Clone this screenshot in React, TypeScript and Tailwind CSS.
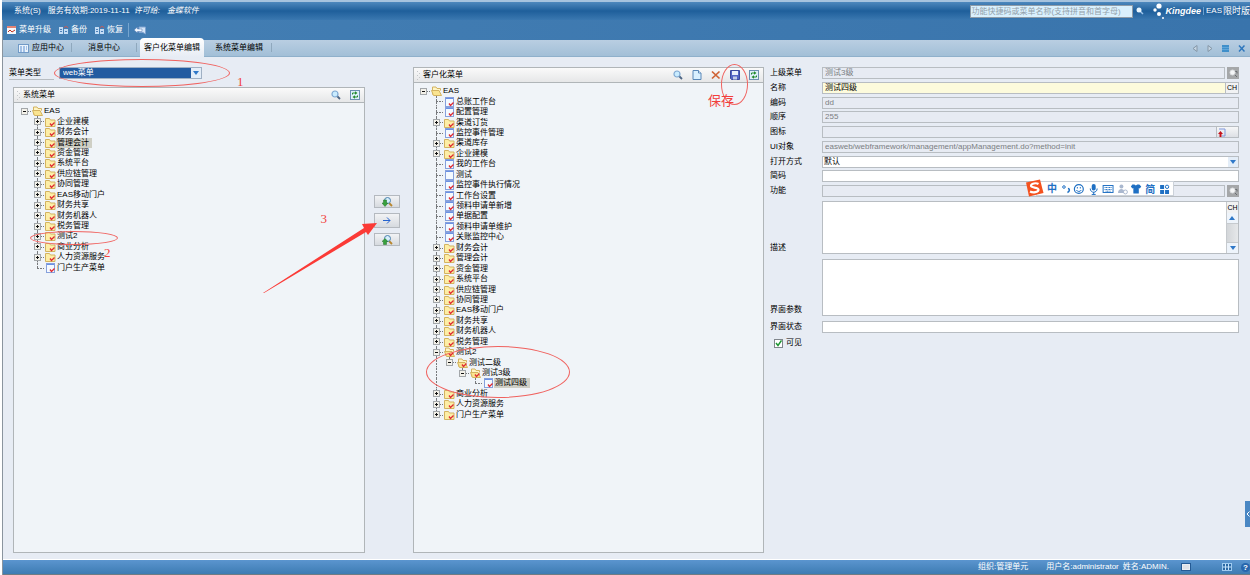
import { FC, ReactNode, useState } from "react";

type Guide = "none" | "line" | "tee" | "end" | "root";
type IconKind = "open" | "openCheck" | "folder" | "doc" | "blank";

interface TreeNode {
	label: string;
	icon: IconKind;
	guides: Guide[];
	toggle?: "+" | "-";
}

const folder = (label: string): TreeNode => ({
	label,
	icon: "folder",
	guides: ["none", "tee"],
	toggle: "+",
});

const doc = (label: string): TreeNode => ({ label, icon: "doc", guides: ["none", "tee"] });

const root: TreeNode = { label: "EAS", icon: "open", guides: ["root"], toggle: "-" };

const systemTree: TreeNode[] = [
	root,
	folder("企业建模"),
	folder("财务会计"),
	folder("管理会计"),
	folder("资金管理"),
	folder("系统平台"),
	folder("供应链管理"),
	folder("协同管理"),
	folder("EAS移动门户"),
	folder("财务共享"),
	folder("财务机器人"),
	folder("税务管理"),
	folder("测试2"),
	folder("商业分析"),
	folder("人力资源服务"),
	{ label: "门户生产菜单", icon: "doc", guides: ["none", "end"] },
];

const customTree: TreeNode[] = [
	root,
	doc("总账工作台"),
	doc("配置管理"),
	folder("渠道订货"),
	doc("监控事件管理"),
	folder("渠道库存"),
	folder("企业建模"),
	doc("我的工作台"),
	{ label: "测试", icon: "blank", guides: ["none", "tee"] },
	doc("监控事件执行情况"),
	doc("工作台设置"),
	doc("领料申请单新增"),
	doc("单据配置"),
	doc("领料申请单维护"),
	doc("关账监控中心"),
	folder("财务会计"),
	folder("管理会计"),
	folder("资金管理"),
	folder("系统平台"),
	folder("供应链管理"),
	folder("协同管理"),
	folder("EAS移动门户"),
	folder("财务共享"),
	folder("财务机器人"),
	folder("税务管理"),
	{ label: "测试2", icon: "openCheck", guides: ["none", "tee"], toggle: "-" },
	{ label: "测试二级", icon: "openCheck", guides: ["none", "line", "end"], toggle: "-" },
	{ label: "测试3级", icon: "openCheck", guides: ["none", "line", "none", "end"], toggle: "-" },
	{ label: "测试四级", icon: "doc", guides: ["none", "line", "none", "none", "end"] },
	folder("商业分析"),
	folder("人力资源服务"),
	{ label: "门户生产菜单", icon: "folder", guides: ["none", "end"], toggle: "+" },
];

const NodeIcon: FC<{ kind: IconKind }> = ({ kind }) => (
	<svg className="ml-px h-[10px] w-[11px] shrink-0" viewBox="0 0 11 10" fill="none">
		{(kind === "doc" || kind === "blank") && (
			<>
				<rect x="1.5" y="0.5" width="8" height="9" fill="#f4f9ff" stroke="#86a0dc" />
				<path d="M2 1.5h7" stroke="#6a90e4" />
			</>
		)}
		{kind === "folder" && (
			<path d="M0.5 9.5v-8h4l1 1.500h4.500v6.500z" fill="#fdeea6" stroke="#d3b360" />
		)}
		{(kind === "open" || kind === "openCheck") && (
			<>
				<path d="M1.5 8.5v-7.5h3.500l1 1.500h3.500v2" fill="#fff5c4" stroke="#d3b360" />
				<path d="M2.500 9.500l-2-5h7.500l2.500 5z" fill="#fae490" stroke="#d3b360" />
			</>
		)}
		{kind !== "open" && kind !== "blank" && (
			<path d="M5 6.500l1.500 2 3-3" stroke="#e02a32" strokeWidth="1.300" />
		)}
	</svg>
);

const GuideCell: FC<{ guide: Guide; toggle?: "+" | "-"; label: string }> = ({
	guide,
	toggle,
	label,
}) => (
	<span className="grid h-full w-[13px] shrink-0 place-items-center">
		<svg className="h-full w-[13px] [grid-area:1/1]" stroke="#77797c" strokeDasharray="2 1">
			{(guide === "line" || guide === "tee") && <line x1="6.5" y1="0" x2="6.5" y2="100%" />}
			{guide === "end" && <line x1="6.5" y1="0" x2="6.5" y2="50%" />}
			{guide !== "none" && guide !== "line" && <path d="M6 5.500h7" />}
		</svg>
		{toggle && (
			<button
				type="button"
				aria-label={`${toggle === "+" ? "展开" : "折叠"}${label}`}
				className="[grid-area:1/1]"
			>
				<svg className="block size-[7px]" viewBox="0 0 7 7">
					<rect x="0.5" y="0.5" width="6" height="6" fill="#f3f1e9" stroke="#a3a7aa" />
					<path d="M2 3.500h3" stroke="#111" />
					{toggle === "+" && <path d="M3.500 2v3" stroke="#111" />}
				</svg>
			</button>
		)}
	</span>
);

const Tree: FC<{ nodes: TreeNode[]; initial: string; className: string }> = ({
	nodes,
	initial,
	className,
}) => {
	const [selected, setSelected] = useState(initial);

	return (
		<ul className={`grid auto-rows-fr ${className}`}>
			{nodes.map((node) => (
				<li key={node.label} className="flex min-h-0 items-center">
					{node.guides.map((guide, i) => (
						<GuideCell
							key={i}
							guide={guide}
							toggle={i === node.guides.length - 1 ? node.toggle : undefined}
							label={node.label}
						/>
					))}
					<NodeIcon kind={node.icon} />
					<button
						type="button"
						onClick={() => setSelected(node.label)}
						className={`h-[10px] px-px leading-[10px] whitespace-nowrap ${
							selected === node.label ? "bg-[#cfcfc5] pr-[3px]" : ""
						}`}
					>
						{node.label}
					</button>
				</li>
			))}
		</ul>
	);
};

const SearchIcon: FC = () => (
	<svg className="block size-[10px]" viewBox="0 0 10 10" fill="none">
		<path d="M6 6l3 3" stroke="#4e6684" strokeWidth="1.800" />
		<circle cx="4" cy="4" r="3" fill="#c9ecff" stroke="#7fa8d2" strokeWidth="1.200" />
	</svg>
);

const RefreshIcon: FC = () => (
	<svg className="block size-[10px]" viewBox="0 0 10 10" fill="none">
		<rect x="0.5" y="0.5" width="9" height="9" fill="#dff0fb" stroke="#6d8fb2" />
		<path d="M2.500 4.500v-1.500h3M7.500 5.500v1.500h-3" stroke="#218a2c" />
		<path d="M5 1.200l2.500 1.800L5 4.800zM5 5.200v3.600L2.500 7z" fill="#218a2c" />
	</svg>
);

const NewIcon: FC = () => (
	<svg className="block size-[10px]" viewBox="0 0 10 10">
		<path d="M1 0.500h5.500l2.500 2.500v6.500H1z" fill="#d9f0ff" stroke="#5a88b8" />
		<path d="M6.500 0.500v2.500H9" fill="#fff" stroke="#5a88b8" />
	</svg>
);

const DeleteIcon: FC = () => (
	<svg className="block size-[10px]" viewBox="0 0 10 10" fill="none">
		<path d="M1 1.500l7.500 7M8.500 1.500L1 8.500" stroke="#cf6233" strokeWidth="1.700" />
	</svg>
);

const SaveIcon: FC = () => (
	<svg className="block size-[10px]" viewBox="0 0 10 10">
		<path d="M0.500 0.500h9v9h-8l-1-1z" fill="#5566c4" stroke="#3c4a9c" />
		<path d="M2 1h6v4H2z" fill="#eaf0fb" />
		<path d="M3 6.500h4V9.500H3z" fill="#c3cce8" />
	</svg>
);

const IconButton: FC<{ label: string; children: ReactNode }> = ({ label, children }) => (
	<button type="button" aria-label={label} className="shrink-0">
		{children}
	</button>
);

const Panel: FC<{ title: string; tools: ReactNode; children: ReactNode }> = ({
	title,
	tools,
	children,
}) => (
	<section className="flex min-h-0 flex-1 flex-col border border-[#b0b5b8] bg-[#f0f4f8]">
		<header className="flex h-[15px] items-center border-b border-[#b0b5b8] bg-linear-to-b from-[#fafafa] to-[#e6e7e8] pr-1 pl-[3px]">
			<svg className="mr-[2px] h-[9px] w-1" viewBox="0 0 4 9" fill="#c3c6c9">
				<path d="M0 0h1v1H0zM2 2h1v1H2zM0 4h1v1H0zM2 6h1v1H2zM0 8h1v1H0z" />
			</svg>
			<h2 className="flex-1">{title}</h2>
			<div className="flex gap-[9px]">{tools}</div>
		</header>
		{children}
	</section>
);

const TransferIcon: FC<{ up?: boolean }> = ({ up }) => (
	<svg className="h-[10px] w-[11px]" viewBox="0 0 11 10" fill="none">
		<path d="M7 6l3 3" stroke="#b8862d" strokeWidth="1.800" />
		<circle cx="5.500" cy="3.500" r="3" fill="#d5eefb" stroke="#4a80ae" />
		<path
			d={up ? "M3 3.500l3 3H4.500v3h-3v-3H0z" : "M1.500 3h3v3H6l-3 3.500L0 6h1.500z"}
			fill="#37a13c"
			stroke="#1e7026"
			strokeWidth="0.500"
		/>
	</svg>
);

const transferStyle =
	"flex w-[26px] items-center justify-center border border-[#b4b9bf] bg-linear-to-b from-[#f2f3f5] to-[#d6dadf]";

const Chevron: FC = () => (
	<svg className="h-1 w-[6px]" viewBox="0 0 6 4">
		<path d="M0 0h6L3 4z" fill="#2f78c8" />
	</svg>
);

const LookupButton: FC<{ label: string }> = ({ label }) => (
	<button
		type="button"
		aria-label={label}
		className="ml-[2px] flex h-[12px] w-3 shrink-0 items-center justify-center bg-[#a5a7a9]"
	>
		<svg className="size-[9px]" viewBox="0 0 9 9" fill="none">
			<path d="M5 5l3 3M6 2.500h2v2" stroke="#6a6d70" />
			<circle cx="3.500" cy="3.500" r="2.500" fill="#f5f6f7" stroke="#dfe1e3" />
		</svg>
	</button>
);

const boxStyle = "min-w-0 flex-1 border border-[#b8bdc2] outline-none";

const Row: FC<{ id: string; label: string; children: ReactNode }> = ({ id, label, children }) => (
	<div className="flex h-3 items-center">
		<label htmlFor={id} className="w-[52px] shrink-0">
			{label}
		</label>
		{children}
	</div>
);

const ReadOnlyInput: FC<{ id: string; value: string }> = ({ id, value }) => (
	<input
		id={id}
		readOnly
		defaultValue={value}
		className={`${boxStyle} h-3 bg-[#e7ebf3] px-[2px] text-[#7b7e82]`}
	/>
);

const MenuForm: FC = () => (
	<form className="min-w-0 flex-[469]">
		<div className="flex h-[130px] flex-col justify-between">
			<Row id="parent" label="上级菜单">
				<ReadOnlyInput id="parent" value="测试3级" />
				<LookupButton label="选择上级菜单" />
			</Row>
			<Row id="name" label="名称">
				<input
					id="name"
					defaultValue="测试四级"
					className={`${boxStyle} h-3 bg-[#fdfbdc] px-[2px]`}
				/>
				<button
					type="button"
					className="flex h-3 w-[13px] items-center justify-center border border-l-0 border-[#b8bdc2] bg-[#f1f2f3] text-[7px] leading-[10px]"
				>
					CH
				</button>
			</Row>
			<Row id="code" label="编码">
				<ReadOnlyInput id="code" value="dd" />
			</Row>
			<Row id="order" label="顺序">
				<ReadOnlyInput id="order" value="255" />
			</Row>
			<Row id="icon" label="图标">
				<ReadOnlyInput id="icon" value="" />
				<button
					type="button"
					aria-label="上传图标"
					className="flex h-3 w-[22px] items-center border border-l-0 border-[#b8bdc2] bg-linear-to-b from-[#f6f7f8] to-[#dde0e5]"
				>
					<svg className="size-[9px]" viewBox="0 0 9 9" fill="none">
						<path d="M2 1h6v7H5" stroke="#7f97dd" />
						<path d="M3.500 3L6 6H4.500v3h-2V6H1z" fill="#c4121c" />
					</svg>
				</button>
			</Row>
			<Row id="ui" label="UI对象">
				<ReadOnlyInput
					id="ui"
					value="easweb/webframework/management/appManagement.do?method=init"
				/>
			</Row>
			<Row id="mode" label="打开方式">
				<div className="grid min-w-0 flex-1 items-center">
					<select
						id="mode"
						className="h-3 w-full appearance-none border border-[#b8bdc2] bg-white px-px leading-[10px] outline-none [grid-area:1/1]"
					>
						<option>默认</option>
					</select>
					<span className="pointer-events-none mr-px flex h-[10px] w-[10px] items-center justify-center justify-self-end bg-[#e3edf8] [grid-area:1/1]">
						<Chevron />
					</span>
				</div>
			</Row>
			<Row id="short" label="简码">
				<input id="short" className={`${boxStyle} h-3 bg-white px-px`} />
			</Row>
			<Row id="func" label="功能">
				<ReadOnlyInput id="func" value="" />
				<LookupButton label="选择功能" />
			</Row>
		</div>
		<div className="mt-1 flex items-end">
			<label htmlFor="desc" className="w-[52px] shrink-0">
				描述
			</label>
			<div className="flex h-[53px] min-w-0 flex-1 border border-[#b8bdc2] bg-white">
				<textarea id="desc" className="min-w-0 flex-1 resize-none outline-none" />
				<div className="flex w-3 flex-col border-l border-[#c6cace] bg-[#dcdfe3]">
					<button
						type="button"
						className="flex h-[11px] items-center justify-center bg-[#f1f2f3] text-[7px] leading-[10px]"
					>
						CH
					</button>
					<button
						type="button"
						aria-label="向上滚动"
						className="flex h-[10px] rotate-180 items-center justify-center bg-[#eef4fb]"
					>
						<Chevron />
					</button>
					<span className="flex-1 border-y border-[#c6cace] bg-linear-to-r from-[#d3d6d9] to-[#e6e8ea]" />
					<button
						type="button"
						aria-label="向下滚动"
						className="flex h-[10px] items-center justify-center bg-[#eef4fb]"
					>
						<Chevron />
					</button>
				</div>
			</div>
		</div>
		<div className="mt-[5px] flex items-end">
			<label htmlFor="params" className="w-[52px] shrink-0">
				界面参数
			</label>
			<textarea id="params" className={`${boxStyle} h-[57px] resize-none bg-white`} />
		</div>
		<div className="mt-[5px]">
			<Row id="state" label="界面状态">
				<input id="state" className={`${boxStyle} h-3 bg-white px-px`} />
			</Row>
		</div>
		<label className="mt-1 ml-1 flex w-fit items-center gap-[3px]">
			<span className="grid size-[9px] place-items-center">
				<input
					type="checkbox"
					defaultChecked
					className="peer size-[9px] appearance-none border border-[#80868c] bg-white [grid-area:1/1]"
				/>
				<svg
					className="pointer-events-none invisible size-[7px] peer-checked:visible [grid-area:1/1]"
					viewBox="0 0 7 7"
					fill="none"
				>
					<path d="M1 3l2 2.500 3.500-5" stroke="#1d9632" strokeWidth="1.500" />
				</svg>
			</span>
			可见
		</label>
	</form>
);

const TitleBar: FC = () => (
	<header className="flex h-[20px] items-center border-t-2 border-[#a6c3de] bg-linear-to-b from-[#4d88bd] via-[#1e5f9b] to-[#3a78b0] pl-3 text-white">
		<button type="button">系统(S)</button>
		<span className="ml-[7px]">服务有效期:2019-11-11</span>
		<span className="ml-1 italic">许可给:</span>
		<span className="ml-[7px] italic">金蝶软件</span>
		<input
			aria-label="功能搜索"
			placeholder="功能快捷码或菜单名称(支持拼音和首字母)"
			className="ml-auto h-[13px] w-[163px] border border-[#8f9ca8] bg-[#d9f0fd] text-black outline-none placeholder:text-[#92a0aa]"
		/>
		<button type="button" aria-label="搜索" className="ml-[3px]">
			<svg className="size-2" viewBox="0 0 8 8">
				<path d="M4.500 4.500L7 7" stroke="#9cc4ea" strokeWidth="1.500" />
				<circle cx="3" cy="3" r="2.500" fill="#e9f6ff" />
			</svg>
		</button>
		<svg className="ml-[9px] h-[16px] w-[12px]" viewBox="0 0 12 16" fill="#fff">
			<circle cx="6" cy="3" r="2.600" />
			<circle cx="2" cy="7" r="1.700" />
			<circle cx="6" cy="11" r="2" />
			<circle cx="10" cy="15" r="1" />
		</svg>
		<span className="text-[9px] font-bold italic">Kingdee</span>
		<span className="mx-[2px] h-2 w-px bg-[#6c9fce]" />
		<span>EAS</span>
		<span className="ml-px text-[9px]">限时版</span>
	</header>
);

const CopyIcon: FC = () => (
	<svg className="h-2 w-[10px]" viewBox="0 0 10 8" fill="none">
		<path d="M0 1h4v7H0zM5 3h4v5H5z" fill="#c3dcf5" />
		<path d="M1 3.500h2M1 5.500h2M6 5.500h2" stroke="#4d80b8" />
		<path d="M5 2c1-2 3-2 4 0" stroke="#e05440" />
	</svg>
);

const Toolbar: FC = () => (
	<div className="flex h-[20px] items-center bg-linear-to-r from-[#447fb4] to-[#3974ac] pl-[4px] text-white">
		<button type="button" className="flex items-center gap-[3px]">
			<svg className="h-2 w-[9px]" viewBox="0 0 9 8" fill="none">
				<path d="M0 0h9v8H0z" fill="#f6f8fb" />
				<path d="M0 1h9" stroke="#e28474" strokeWidth="2" />
				<path d="M1 6l2-2 2 2 3-2" stroke="#c1311f" />
			</svg>
			菜单升级
		</button>
		<button type="button" className="ml-2 flex items-center gap-[2px]">
			<CopyIcon />
			备份
		</button>
		<button type="button" className="ml-2 flex items-center gap-[2px]">
			<CopyIcon />
			恢复
		</button>
		<span className="mx-[5px] h-[14px] w-px bg-[#76a5cf]" />
		<button type="button" aria-label="退出">
			<svg className="h-[9px] w-3" viewBox="0 0 12 9" fill="none">
				<path d="M5 1h6.500v7L9 6.500H5z" fill="#d4e4f6" stroke="#7fa3d0" />
				<path d="M0 4l3.500-3v2H8v2.500H3.500V7z" fill="#f4f9ff" stroke="#4b70ac" strokeWidth="0.500" />
			</svg>
		</button>
	</div>
);

const TabSeparator: FC = () => <span className="mb-1 h-[9px] w-px self-end bg-[#8fa8bd]" />;

const TabBar: FC = () => (
	<nav className="flex h-[17px] items-center border-b border-[#8fb0cb] bg-linear-to-b from-[#b9cee2] to-[#a2bfd7] pr-[5px]">
		<button type="button" className="flex items-center gap-[3px] pr-[7px] pl-[15px]">
			<svg className="h-[9px] w-[11px]" viewBox="0 0 11 9" fill="none">
				<rect x="0.500" y="0.500" width="10" height="8" fill="#eaf3fc" stroke="#7099c6" />
				<path d="M2 3h2M5 3h2M8 3h1M2 5h2M5 5h2M8 5h1M2 7h2M5 7h2" stroke="#5d8fd0" />
			</svg>
			应用中心
		</button>
		<TabSeparator />
		<button type="button" className="px-4">
			消息中心
		</button>
		<TabSeparator />
		<button
			type="button"
			className="mx-[3px] -mt-[2px] h-[19px] self-start rounded-t-[4px] bg-linear-to-b from-white to-[#e7ecf4] px-[4px]"
		>
			客户化菜单编辑
		</button>
		<button type="button" className="px-2">
			系统菜单编辑
		</button>
		<TabSeparator />
		<div className="ml-auto flex items-center gap-[9px]">
			<button type="button" aria-label="上一个">
				<svg className="h-[7px] w-[6px]" viewBox="0 0 6 7">
					<path d="M5 0.500v6L1 3.500z" fill="#c6d6e4" stroke="#8596a6" />
				</svg>
			</button>
			<button type="button" aria-label="下一个">
				<svg className="h-[7px] w-[6px]" viewBox="0 0 6 7">
					<path d="M1 0.500v6l4-3z" fill="#c6d6e4" stroke="#8596a6" />
				</svg>
			</button>
			<button type="button" aria-label="窗口列表">
				<svg className="size-[7px]" viewBox="0 0 7 7">
					<path d="M0 0h7v7H0z" fill="#3f8fca" />
					<path d="M0 2.500h7M0 4.500h7" stroke="#5fa6da" />
				</svg>
			</button>
			<button type="button" aria-label="关闭">
				<svg className="size-[7px]" viewBox="0 0 7 7">
					<path d="M1 0.500l5.500 6M6.500 0.500L1 6.500" stroke="#2f77bd" strokeWidth="1.500" />
				</svg>
			</button>
		</div>
	</nav>
);

const Ring: FC<{ className: string }> = ({ className }) => (
	<span
		className={`pointer-events-none absolute rounded-[50%] border border-[#f0625f] ${className}`}
	/>
);

const noteStyle =
	"pointer-events-none absolute font-[family-name:'Liberation_Serif','Noto_Sans_CJK_SC',serif] text-[13px] leading-[14px] text-[#f23f3c]";

// Floating input method bar
const ImeBar: FC = () => (
	<div className="absolute top-[124px] right-[76px] flex h-[15px] w-[138px] items-center border border-[#ccd2da] bg-white pl-[7px] text-[#1f70c4]">
		<svg className="absolute -top-[3px] -left-[12px] h-[18px] w-[19px]" viewBox="0 0 19 18" fill="none">
			<path d="M1 3.500L15 0.500l3.500 13.500L4 17.500z" fill="#f4511e" />
			<path
				d="M13.500 5C11 3.500 6 4.500 6 6.800s7.500 1.200 7.500 3.900-5.500 3.300-8.500 1.800"
				stroke="#fff"
				strokeWidth="2.200"
			/>
		</svg>
		<span className="w-4 text-center text-[10px] font-bold">中</span>
		<svg className="h-3 flex-1" viewBox="0 0 114 12" fill="none">
			<circle cx="4" cy="4" r="1.300" stroke="#1f70c4" />
			<path d="M8 5.500c2 0 2 3-0.500 4" stroke="#1f70c4" strokeWidth="1.500" />
			<circle cx="19" cy="6" r="4.500" stroke="#1f70c4" strokeWidth="1.200" />
			<path d="M17.500 4v1.500M20.500 4v1.500M16.500 7c1 2 4 2 5 0" stroke="#1f70c4" />
			<rect x="32" y="1" width="4" height="6.500" rx="2" fill="#1f70c4" />
			<path d="M30.500 5.500c0 5 7 5 7 0M34 9v2.500M32 11.500h4" stroke="#1f70c4" />
			<rect x="43.500" y="2.500" width="10" height="7" stroke="#1f70c4" />
			<path d="M45 4.500h7M45 6.500h7M46 8.200h5" stroke="#1f70c4" strokeDasharray="1 .5" />
			<circle cx="62" cy="3.500" r="2" fill="#aab8cf" />
			<path d="M58.500 10c0-5 6-5 6.500-1v1z" fill="#aab8cf" />
			<circle cx="66" cy="9" r="2" fill="#fff" stroke="#aab8cf" />
			<path d="M73 1.500h2l1.500 1 1.500-1h2l2 2-1.500 2-1-.5v5.500h-5.500V5l-1 .5-1.500-2z" fill="#1f70c4" />
			<path d="M101 2h4v4h-4zM101 7h4v4h-4zM106 7h4v4h-4z" fill="#1f70c4" />
			<circle cx="108" cy="3.800" r="1.700" stroke="#1f70c4" />
			<text x="86" y="10" fill="#1f70c4" fontSize="10" fontWeight="bold">
				简
			</text>
		</svg>
	</div>
);

const StatusBar: FC = () => (
	<footer className="flex h-[15px] items-center border-b border-[#6f7c83] bg-linear-to-b from-[#5b95cf] to-[#3d7cb3] text-white">
		<span className="ml-auto">组织:管理单元</span>
		<span className="ml-[18px]">用户名:administrator</span>
		<span className="ml-1">姓名:ADMIN.</span>
		<svg className="ml-3 h-2 w-[10px]" viewBox="0 0 10 8">
			<rect x="0.500" y="0.500" width="9" height="7" fill="#e9edf2" stroke="#245a94" />
			<path d="M2 3h6M2 5h6" stroke="#d3d7dd" />
		</svg>
		<svg className="ml-[31px] h-2 w-[10px]" viewBox="0 0 10 8" fill="none">
			<rect x="0.500" y="0.500" width="9" height="7" fill="#2a68a5" stroke="#9fcbf0" />
			<path d="M1 4h8M3.500 1v6M6.500 1v6" stroke="#c4e2fa" />
		</svg>
		<button
			type="button"
			aria-label="帮助"
			className="ml-[9px] size-[9px] rounded-full bg-[#2766ad] leading-[9px] font-bold"
		>
			?
		</button>
	</footer>
);

const App: FC = () => (
	<div className="flex h-screen min-h-[575px] flex-col overflow-hidden bg-white pl-[2px] font-[family-name:'Liberation_Sans','Noto_Sans_CJK_SC',sans-serif] text-[8px] leading-[12px] text-black">
		<TitleBar />
		<div className="flex min-h-0 flex-1 flex-col border-l border-[#8a949e]">
			<Toolbar />
			<TabBar />
			<main className="relative flex min-h-0 flex-1 border-b border-white bg-[#e7ecf4] pt-[10px] pr-[11px] pb-[6px] pl-[6px]">
				<div className="relative flex min-w-0 flex-[356] flex-col">
					<div className="relative flex h-3 items-center">
						<label
							htmlFor="menuType"
							className="mr-[5px] w-[45px] border-b border-[#b8bdc2]"
						>
							菜单类型
						</label>
						<div className="grid w-[143px] items-center">
							<select
								id="menuType"
								className="h-3 w-full appearance-none border border-[#9fb0c4] bg-[#235ba1] px-[3px] leading-[10px] text-white outline-none [grid-area:1/1]"
							>
								<option>web菜单</option>
							</select>
							<span className="pointer-events-none mr-px flex size-[10px] items-center justify-center justify-self-end bg-[#e3edf8] [grid-area:1/1]">
								<Chevron />
							</span>
						</div>
						<Ring className="-top-2 left-[45px] h-[28px] w-[176px]" />
						<span className={`${noteStyle} top-2 left-[228px]`}>1</span>
					</div>
					<div className="mt-2 ml-1 flex min-h-0 flex-1 flex-col">
						<Panel
							title="系统菜单"
							tools={
								<>
									<IconButton label="查找">
										<SearchIcon />
									</IconButton>
									<IconButton label="刷新">
										<RefreshIcon />
									</IconButton>
								</>
							}
						>
							<div className="relative pt-[3px] pl-1">
								<Tree nodes={systemTree} initial="管理会计" className="h-[167px]" />
								<Ring className="top-[128px] left-4 h-[14px] w-[88px]" />
								<span className={`${noteStyle} top-[143px] left-[90px]`}>2</span>
							</div>
						</Panel>
					</div>
				</div>
				<div className="relative flex w-12 shrink-0 flex-col items-center gap-[5px] pt-[128px] pr-1">
					<button type="button" aria-label="向下查找" className={`${transferStyle} h-[13px]`}>
						<TransferIcon />
					</button>
					<button type="button" aria-label="添加" className={`${transferStyle} h-[15px]`}>
						<svg className="h-[7px] w-2" viewBox="0 0 8 7" fill="none">
							<path d="M0 3.500h7M4 0.500l3 3-3 3" stroke="#2463cf" />
						</svg>
					</button>
					<button type="button" aria-label="向上查找" className={`${transferStyle} h-[13px]`}>
						<TransferIcon up />
					</button>
					<svg
						className="pointer-events-none absolute top-[155px] right-9 h-[72px] w-[114px]"
						viewBox="0 0 114 72"
					>
						<path d="M0 71L101 6l-2-4 15-1-9 12-2-3L1 71z" fill="#fb3a36" />
					</svg>
					<span className={`${noteStyle} top-[145px] right-[86px]`}>3</span>
				</div>
				<div className="relative flex min-w-0 flex-[351] flex-col">
					<Panel
						title="客户化菜单"
						tools={
							<>
								<IconButton label="查找">
									<SearchIcon />
								</IconButton>
								<IconButton label="新建">
									<NewIcon />
								</IconButton>
								<IconButton label="删除">
									<DeleteIcon />
								</IconButton>
								<IconButton label="保存菜单">
									<SaveIcon />
								</IconButton>
								<IconButton label="刷新">
									<RefreshIcon />
								</IconButton>
							</>
						}
					>
						<div className="relative pt-[3px] pl-[3px]">
							<Tree nodes={customTree} initial="测试四级" className="h-[334px]" />
							<Ring className="top-[263px] left-3 h-[52px] w-[144px]" />
						</div>
					</Panel>
					<Ring className="-top-[3px] right-4 h-[41px] w-[27px]" />
					<span className={`${noteStyle} top-[27px] right-[30px]`}>保存</span>
				</div>
				<div className="w-[6px] shrink-0" />
				<MenuForm />
				<ImeBar />
				<button
					type="button"
					aria-label="展开侧栏"
					className="absolute top-[444px] right-0 flex h-[26px] w-[5px] items-center justify-center bg-[#4a87c3]"
				>
					<svg className="h-[6px] w-1" viewBox="0 0 4 6" fill="none">
						<path d="M3.500 0.500L1 3l2.500 2.500" stroke="#fff" />
					</svg>
				</button>
			</main>
			<StatusBar />
		</div>
	</div>
);

export default App;
